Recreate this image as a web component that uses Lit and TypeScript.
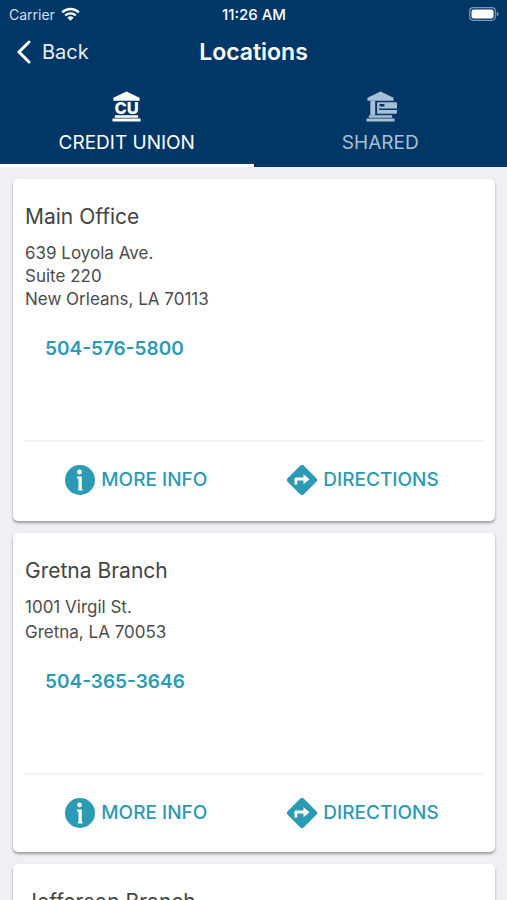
import { LitElement, html, css, svg, nothing } from "lit";
import { customElement, property, state } from "lit/decorators.js";
import { classMap } from "lit/directives/class-map.js";

interface Branch {
  name: string;
  address: string[];
  phone: string;
}

const BRANCHES: Branch[] = [
  {
    name: "Main Office",
    address: ["639 Loyola Ave.", "Suite 220", "New Orleans, LA 70113"],
    phone: "504-576-5800",
  },
  {
    name: "Gretna Branch",
    address: ["1001 Virgil St.", "Gretna, LA 70053"],
    phone: "504-365-3646",
  },
  { name: "Jefferson Branch", address: [], phone: "" },
];

// Bank building with the letters CU standing in for its columns.
const creditUnionIcon = html`<svg class="tab-icon" viewBox="0 0 32 32" aria-hidden="true">
  ${svg`
    <path fill="currentColor" d="M16 .5 29.500 7v3h-27V7z"/>
    <text class="letters" x="16" y="23.500" text-anchor="middle">CU</text>
    <path fill="currentColor" d="M4 25h24v2.500H4zM1.500 28.500h29V31.500h-29z"/>`}
</svg>`;

// Bank building with a payment card over its right-hand columns.
const sharedIcon = html`<svg class="tab-icon" viewBox="0 0 32 32" aria-hidden="true">
  ${svg`
    <path fill="currentColor" d="M16 .5 29.500 7v3h-27V7z"/>
    <path fill="currentColor" d="M5.500 10h5V25h-5zM12.500 11.500H32a1 1 0 0 1 1 1V22.500a1 1 0 0 1-1 1H12.500z"/>
    <path fill="#003767" d="M15 13.500h5v2.500h-5zM14.500 18h18.500v1.500H14.500z"/>
    <path fill="currentColor" d="M4 25h24v2.500H4zM1.500 28.500h29V31.500h-29z"/>`}
</svg>`;

@customElement("location-card")
export class LocationCard extends LitElement {
  @property({ attribute: false }) branch!: Branch;

  static styles = css`
    :host {
      display: block;
    }
    .card {
      background: #fff;
      border-radius: 5px;
      box-shadow: 0 2px 3px rgba(0, 0, 0, 0.36);
      padding: 24px 12px 0;
    }
    .name {
      margin: 0;
      font-size: 21px;
      line-height: 28px;
      font-weight: 400;
      color: #444;
    }
    .address {
      margin: 10px 0 0;
      font-style: normal;
      font-size: 17px;
      line-height: 25px;
      color: #4c4c4c;
    }
    .dense .address {
      padding: 1px 0;
      line-height: 23px;
    }
    .line {
      display: block;
    }
    .phone {
      display: block;
      width: max-content;
      margin: 25px 0 79px 20px;
      font-size: 19px;
      line-height: 24px;
      font-weight: 600;
      color: #2b9ab5;
      text-decoration: none;
    }
    .actions {
      display: flex;
      justify-content: center;
      gap: 80px;
      border-top: 2px solid #f3f3f4;
      padding: 22px 4px 23px 0;
    }
    .dense .actions {
      padding-bottom: 25px;
    }
    .action {
      display: flex;
      align-items: center;
      gap: 6px;
      border: 0;
      padding: 0;
      background: none;
      font: 500 19px/32px Inter, sans-serif;
      color: #2b9ab5;
      cursor: pointer;
    }
    .icon {
      width: 30px;
      height: 30px;
    }
  `;

  render() {
    const { name, address, phone } = this.branch;
    return html`<article class=${classMap({ card: true, dense: address.length > 2 })}>
      <h2 class="name">${name}</h2>
      <address class="address">
        ${address.map((line) => html`<span class="line">${line}</span>`)}
      </address>
      ${phone ? html`<a class="phone" href="tel:${phone}">${phone}</a>` : nothing}
      <div class="actions">
        <button class="action" type="button">
          <svg class="icon" viewBox="0 0 30 30" aria-hidden="true">
            <circle cx="15" cy="15" r="15" fill="#2b9ab5" />
            <circle cx="14.500" cy="7" r="2.400" fill="#fff" />
            <path fill="#fff" d="M12 11.500h4.800V24h.700v1.500h-4.500V24h.500V13.500H12z" />
          </svg>
          MORE INFO
        </button>
        <button class="action" type="button">
          <svg class="icon" viewBox="0 0 30 30" aria-hidden="true">
            <path fill="#2b9ab5" d="M12.900.900a3 3 0 0 1 4.200 0l12 12a3 3 0 0 1 0 4.200l-12 12a3 3 0 0 1-4.200 0l-12-12a3 3 0 0 1 0-4.200z" />
            <path fill="#fff" d="M7.500 19.500v-5.500a1.500 1.500 0 0 1 1.500-1.500h7.500V9.300l6 5-6 5v-3.800H10.300v4z" />
          </svg>
          DIRECTIONS
        </button>
      </div>
    </article>`;
  }
}

@customElement("app-root")
export class AppRoot extends LitElement {
  @state() private tab: "cu" | "shared" = "cu";

  static styles = css`
    :host {
      display: block;
      height: 100vh;
      overflow: hidden;
      background: #efeff4;
      font-family: Inter, sans-serif;
    }
    .header {
      background: #003767;
      color: #fff;
    }
    .status,
    .nav {
      display: grid;
      grid-template-columns: 1fr auto 1fr;
      align-items: center;
    }
    .status {
      height: 28px;
      padding: 0 8px 0 9px;
      font-size: 14px;
    }
    .carrier {
      display: flex;
      align-items: center;
      gap: 6px;
      color: #d5dfe8;
    }
    .wifi {
      width: 19px;
      height: 14px;
    }
    .clock {
      font-size: 15px;
      font-weight: 500;
    }
    .battery {
      justify-self: end;
      width: 30px;
      height: 14px;
    }
    .nav {
      height: 48px;
      padding: 0 16px;
    }
    .back {
      display: flex;
      align-items: center;
      justify-self: start;
      gap: 11px;
      border: 0;
      padding: 0;
      background: none;
      color: #e9eff5;
      font: 400 20px/28px Inter, sans-serif;
      cursor: pointer;
    }
    .chevron {
      width: 15px;
      height: 24px;
    }
    .title {
      margin: 0;
      font-size: 23px;
      line-height: 28px;
      font-weight: 600;
    }
    .tabs {
      display: grid;
      grid-template-columns: 1fr 1fr;
    }
    .tab {
      display: flex;
      flex-direction: column;
      align-items: center;
      gap: 7px;
      border: 0;
      border-bottom: 3px solid transparent;
      padding: 15px 0 7px;
      background: none;
      color: #a9bfd3;
      font: 400 19px/28px Inter, sans-serif;
      cursor: pointer;
    }
    .tab.active {
      border-bottom-color: #fff;
      color: #fff;
    }
    .tab-icon {
      width: 31px;
      height: 31px;
      overflow: visible;
    }
    .letters {
      font: 800 17px Inter, sans-serif;
      fill: currentColor;
    }
    .list {
      display: flex;
      flex-direction: column;
      gap: 12px;
      padding: 12px 12px 12px 13px;
    }
  `;

  render() {
    return html`
      <header class="header">
        <div class="status">
          <span class="carrier">
            Carrier
            <svg class="wifi" viewBox="0 0 19 14" aria-hidden="true">
              <path fill="none" stroke="#fff" stroke-width="2.400" d="M1.200 5.300a12 12 0 0 1 16.600 0M4.200 8.500a7.700 7.700 0 0 1 10.600 0" />
              <path fill="#fff" d="M6.400 10.700a4.500 4.500 0 0 1 6.200 0L9.500 13.800z" />
            </svg>
          </span>
          <span class="clock">11:26 AM</span>
          <svg class="battery" viewBox="0 0 30 14" aria-hidden="true">
            <rect x=".700" y=".700" width="25.600" height="12.600" rx="3.500" fill="none" stroke="#7f9bb3" stroke-width="1.200" />
            <rect x="2.500" y="2.500" width="22" height="9" rx="2" fill="#fff" />
            <path fill="#7f9bb3" d="M27.700 4.800q2 .700 2 2.200t-2 2.200z" />
          </svg>
        </div>
        <div class="nav">
          <button class="back" type="button">
            <svg class="chevron" viewBox="0 0 15 24" aria-hidden="true">
              <path fill="none" stroke="#fff" stroke-width="3" stroke-linecap="round" stroke-linejoin="round" d="M13 2 3 12l10 10" />
            </svg>
            Back
          </button>
          <h1 class="title">Locations</h1>
        </div>
        <div class="tabs" role="tablist">
          ${this.renderTab("cu", "CREDIT UNION", creditUnionIcon)}
          ${this.renderTab("shared", "SHARED", sharedIcon)}
        </div>
      </header>
      <main class="list">
        ${BRANCHES.map((b) => html`<location-card .branch=${b}></location-card>`)}
      </main>
    `;
  }

  private renderTab(id: "cu" | "shared", label: string, icon: unknown) {
    const active = this.tab === id;
    return html`<button
      class=${classMap({ tab: true, active })}
      type="button"
      role="tab"
      aria-selected=${active}
      @click=${() => (this.tab = id)}
    >
      ${icon}${label}
    </button>`;
  }
}
